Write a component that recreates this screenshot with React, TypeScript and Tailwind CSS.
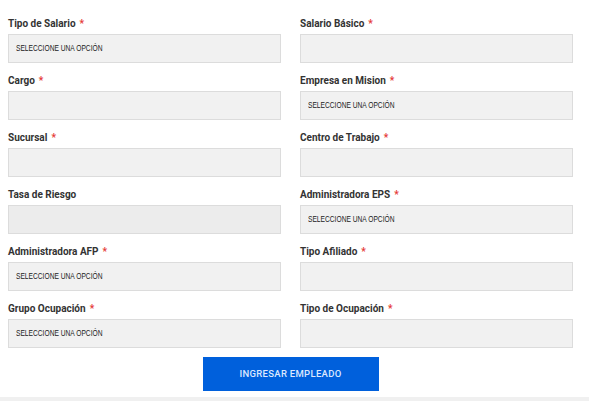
import React from 'react';

interface Field {
    label: string;
    required: boolean;
    select?: boolean;
    disabled?: boolean;
}

const fields: Field[] = [
    { label: 'Tipo de Salario', required: true, select: true },
    { label: 'Salario Básico', required: true },
    { label: 'Cargo', required: true },
    { label: 'Empresa en Mision', required: true, select: true },
    { label: 'Sucursal', required: true },
    { label: 'Centro de Trabajo', required: true },
    { label: 'Tasa de Riesgo', required: false, disabled: true },
    { label: 'Administradora EPS', required: true, select: true },
    { label: 'Administradora AFP', required: true, select: true },
    { label: 'Tipo Afiliado', required: true },
    { label: 'Grupo Ocupación', required: true, select: true },
    { label: 'Tipo de Ocupación', required: true },
];

const FormField: React.FC<{ field: Field }> = ({ field }) => (
    <div className="flex flex-col">
        <label className="text-[10px] leading-[14px] font-bold text-[#333333] font-['Roboto',sans-serif]">
            {field.label}
            {field.required && <span className="text-[#e53935] ml-[4px]">*</span>}
        </label>
        <div
            className={`mt-[3px] h-[29px] border border-[#dcdcdc] flex items-center pl-[7px] pb-[1px] ${field.disabled ? 'bg-[#ececec]' : 'bg-[#f1f1f1]'}`}
        >
            {field.select && (
                <span className="inline-block origin-left scale-x-[0.7] whitespace-nowrap text-[9.5px] text-[#222222] font-['Liberation_Sans',sans-serif]">
                    SELECCIONE UNA OPCIÓN
                </span>
            )}
        </div>
    </div>
);

export default function App() {
    return (
        <div className="w-full min-h-[401px] flex flex-col bg-[#f0f0f0]">
            <div className="bg-white pl-2 pr-4 pt-[17px] pb-[6px]">
                <div className="grid grid-cols-2 gap-x-[19px] gap-y-[11px]">
                    {fields.map(f => (
                        <FormField key={f.label} field={f} />
                    ))}
                </div>
                <div className="flex justify-center mt-[9px]">
                    <button className="w-[176px] h-[34px] bg-[#0060dc] text-[#dce8ff] text-[9.5px] font-medium tracking-[0.3px] font-['Roboto',sans-serif]">
                        INGRESAR EMPLEADO
                    </button>
                </div>
            </div>
            <div className="flex-1" />
        </div>
    );
}
